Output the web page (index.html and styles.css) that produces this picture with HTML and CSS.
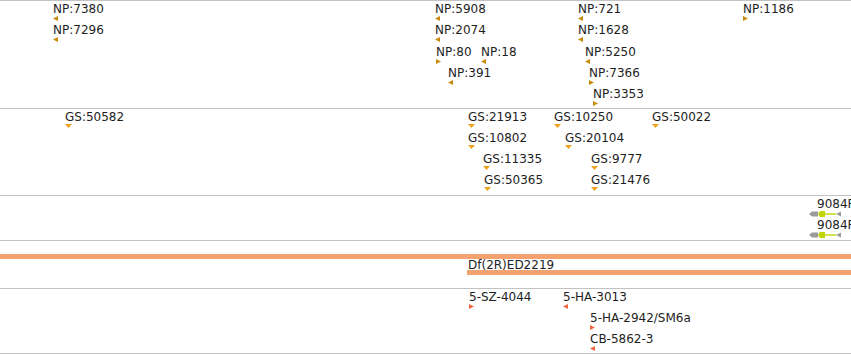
FILE: index.html
```
<!DOCTYPE html>
<html lang="en">
<head>
  <meta charset="UTF-8" />
  <title>Track view</title>
  <link rel="stylesheet" href="styles.css">
</head>
<body>
  <div class="tracks">

    <!-- NP insertions -->
    <div class="track np" style="height:107px">
      <div class="feat r0" style="left:53px"><div class="lbl">NP:7380</div><div class="arr rev"></div></div>
      <div class="feat r1" style="left:53px"><div class="lbl">NP:7296</div><div class="arr rev"></div></div>
      <div class="feat r0" style="left:435px"><div class="lbl">NP:5908</div><div class="arr rev"></div></div>
      <div class="feat r1" style="left:435px"><div class="lbl">NP:2074</div><div class="arr rev"></div></div>
      <div class="feat r2" style="left:436px"><div class="lbl">NP:80</div><div class="arr fwd"></div></div>
      <div class="feat r2" style="left:481px"><div class="lbl">NP:18</div><div class="arr rev"></div></div>
      <div class="feat r3" style="left:448px"><div class="lbl">NP:391</div><div class="arr rev"></div></div>
      <div class="feat r0" style="left:578px"><div class="lbl">NP:721</div><div class="arr rev"></div></div>
      <div class="feat r1" style="left:578px"><div class="lbl">NP:1628</div><div class="arr rev"></div></div>
      <div class="feat r2" style="left:585px"><div class="lbl">NP:5250</div><div class="arr rev"></div></div>
      <div class="feat r3" style="left:589px"><div class="lbl">NP:7366</div><div class="arr fwd"></div></div>
      <div class="feat r4" style="left:593px"><div class="lbl">NP:3353</div><div class="arr fwd"></div></div>
      <div class="feat r0" style="left:743px"><div class="lbl">NP:1186</div><div class="arr fwd"></div></div>
    </div>

    <!-- GS insertions -->
    <div class="track gs" style="height:86px">
      <div class="feat r0" style="left:65px"><div class="lbl">GS:50582</div><div class="arr down"></div></div>
      <div class="feat r0" style="left:468px"><div class="lbl">GS:21913</div><div class="arr down"></div></div>
      <div class="feat r0" style="left:554px"><div class="lbl">GS:10250</div><div class="arr down"></div></div>
      <div class="feat r0" style="left:652px"><div class="lbl">GS:50022</div><div class="arr down"></div></div>
      <div class="feat r1" style="left:468px"><div class="lbl">GS:10802</div><div class="arr down"></div></div>
      <div class="feat r1" style="left:565px"><div class="lbl">GS:20104</div><div class="arr down"></div></div>
      <div class="feat r2" style="left:483px"><div class="lbl">GS:11335</div><div class="arr down"></div></div>
      <div class="feat r2" style="left:591px"><div class="lbl">GS:9777</div><div class="arr down"></div></div>
      <div class="feat r3" style="left:484px"><div class="lbl">GS:50365</div><div class="arr down"></div></div>
      <div class="feat r3" style="left:591px"><div class="lbl">GS:21476</div><div class="arr down"></div></div>
    </div>

    <!-- transcripts -->
    <div class="track genes" style="height:44px">
      <div class="feat r0" style="left:809px">
        <div class="lbl shift">9084RA</div>
        <svg class="gene" width="33" height="6" viewBox="0 0 33 6">
          <line x1="16" y1="3" x2="27" y2="3" stroke="#c2d400" stroke-width="1.4"/>
          <polygon points="0,3 3,0.5 9,0.5 9,5.5 3,5.5" fill="#9a9a9a"/>
          <polygon points="9,3 11,0 16,0 16,6 11,6" fill="#c2d400"/>
          <polygon points="27,3 32,0.5 32,5.5" fill="#9a9a9a"/>
        </svg>
      </div>
      <div class="feat r1" style="left:809px">
        <div class="lbl shift">9084RB</div>
        <svg class="gene" width="33" height="6" viewBox="0 0 33 6">
          <line x1="16" y1="3" x2="27" y2="3" stroke="#c2d400" stroke-width="1.4"/>
          <polygon points="0,3 3,0.5 9,0.5 9,5.5 3,5.5" fill="#9a9a9a"/>
          <polygon points="9,3 11,0 16,0 16,6 11,6" fill="#c2d400"/>
          <polygon points="27,3 32,0.5 32,5.5" fill="#9a9a9a"/>
        </svg>
      </div>
    </div>

    <!-- deficiencies -->
    <div class="track dfs" style="height:47px">
      <div class="bar" style="left:0; top:13px; width:851px"></div>
      <div class="feat" style="left:468px; top:17px"><div class="lbl">Df(2R)ED2219</div></div>
      <div class="bar" style="left:467px; top:29px; width:384px"></div>
    </div>

    <!-- other insertions -->
    <div class="track ins" style="height:64px">
      <div class="feat r0" style="left:469px"><div class="lbl">5-SZ-4044</div><div class="arr fwd"></div></div>
      <div class="feat r0" style="left:563px"><div class="lbl">5-HA-3013</div><div class="arr rev"></div></div>
      <div class="feat r1" style="left:590px"><div class="lbl">5-HA-2942/SM6a</div><div class="arr fwd"></div></div>
      <div class="feat r2" style="left:590px"><div class="lbl">CB-5862-3</div><div class="arr rev"></div></div>
    </div>

  </div>
</body>
</html>
```

FILE: styles.css
```
body {
  margin: 0;
  background: #fff;
  font-family: "DejaVu Sans", sans-serif;
  font-size: 12px;
  color: #1e1e1e;
}

.tracks {
  width: 851px;
}

.track {
  position: relative;
  overflow: hidden;
  border-top: 1px solid #c2c2c2;
}

.track:last-child {
  border-bottom: 1px solid #c2c2c2;
}

.feat {
  position: absolute;
}

.r0 { top: 1px; }
.r1 { top: 22px; }
.r2 { top: 44px; }
.r3 { top: 65px; }
.r4 { top: 86px; }

.gs .r2 { top: 43px; }
.gs .r3 { top: 64px; }
.ins .r2 { top: 43px; }

.lbl {
  line-height: 14px;
  white-space: nowrap;
}

.lbl.shift {
  margin-left: 8px;
}

.arr {
  width: 5px;
  height: 5px;
  background: #cc8a0a;
}

.arr.rev {
  clip-path: polygon(0 50%, 100% 0, 100% 100%);
}

.arr.fwd {
  clip-path: polygon(0 0, 100% 50%, 0 100%);
}

.arr.down {
  width: 7px;
  height: 4px;
  background: #eea21e;
  clip-path: polygon(0 0, 100% 0, 50% 100%);
}

.ins .arr {
  background: #f2663f;
}

.gene {
  display: block;
}

.bar {
  position: absolute;
  height: 5px;
  background: #f4a370;
}
```
